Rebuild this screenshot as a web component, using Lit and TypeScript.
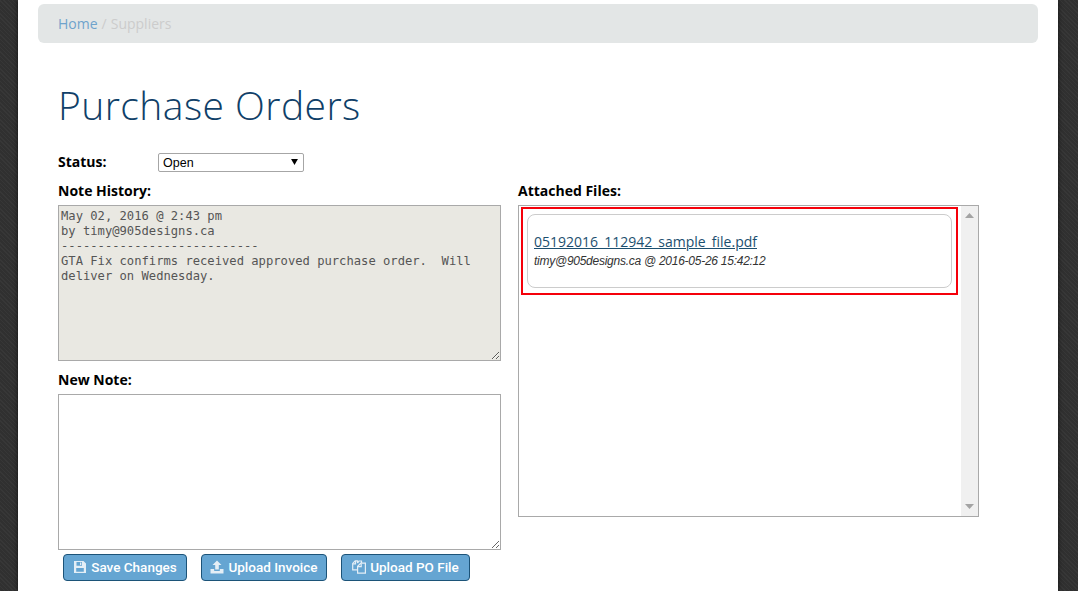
import { LitElement, html, css, svg } from "lit";
import { customElement } from "lit/decorators.js";

const saveIcon = svg`<path fill-rule="evenodd" d="M1 1h9.5L13 3.5V13H1z M3.5 2v3.8h5.5V2z M3.2 8v3.8h7.6V8z M7 2.6h1.3v2.5H7z"/>`;
const uploadIcon = svg`<path d="M7 0.5 11.5 5H8.8V9.5H5.2V5H2.5z"/><path d="M0.5 9H4.2V11H9.8V9H13.5V13.5H0.5z"/>`;
const filesIcon = svg`<g fill="none" stroke="currentColor" stroke-width="1.2"><path d="M5.5 3V.9H3.2L.7 3.4v6.4h4.6"/><path d="M.9 3.8h2.6V1"/><path d="M5.6 13.2V6.2L8.8 3.2H13.4V13.2z"/><path d="M5.8 6.6H9.2V3.4"/><path d="M5.5 3.2 7 1h2.5v2"/></g>`;

@customElement("app-root")
export class AppRoot extends LitElement {
  static styles = css`
    :host { display: block; height: 591px; overflow: hidden; background: #303030;
      background-image: repeating-linear-gradient(45deg, rgba(255,255,255,.035) 0 1px, transparent 1px 3px); }
    * { box-sizing: border-box; }
    .panel { margin: 0 20px 0 18px; height: 591px; background: #fff; padding: 4px 20px 0; box-shadow: 0 0 4px #111;
      font-family: "Open Sans", sans-serif; font-size: 14px; color: #000; }
    .crumb { height: 39px; background: #e3e6e6; border-radius: 6px; padding: 0 20px; display: flex; align-items: center; gap: 4px; font-size: 14px; color: #ccc; }
    .crumb a { color: #6fa3cc; text-decoration: none; }
    .content { padding-left: 20px; }
    h1 { margin: 34px 0 0; height: 56px; font-weight: 300; font-size: 39px; line-height: 56px; color: #0f4068; letter-spacing: .45px; }
    .status { display: flex; align-items: center; margin-top: 19px; height: 20px; }
    label { font-weight: 700; font-size: 14px; line-height: 19px; display: block; }
    .status label { width: 100px; position: relative; top: -1px; }
    .sel { position: relative; display: block; width: 146px; height: 19px; }
    select { appearance: none; width: 100%; height: 100%; border: 1px solid #a6a6a6; border-radius: 2px; background: #fff;
      font: 12.5px "Liberation Sans", sans-serif; color: #000; padding: 1px 0 0 4px; margin: 0; display: block; }
    .sel svg { position: absolute; right: 6px; top: 6px; }
    .cols { display: flex; gap: 17px; margin-top: 9px; }
    .left { width: 443px; }
    .right { width: 461px; }
    textarea { display: block; width: 443px; margin: 5px 0 0; border: 1px solid #a9a9a9; border-radius: 0; padding: 3px 2px;
      font: 12.16px/15px "DejaVu Sans Mono", monospace; color: #555; resize: vertical; outline: none; }
    .hist { height: 156px; background: #e9e8e2; }
    .new { height: 156px; background: #fff; }
    .newlabel { margin-top: 9px; }
    .btns { display: flex; gap: 14px; margin: 4px 0 0 5px; }
    .btn { height: 27px; display: flex; align-items: center; justify-content: center; gap: 4px; background: #65a5d2; border: 1px solid #1c5378; border-radius: 4px;
      color: #fff; font: 500 13.5px Roboto, "Liberation Sans", sans-serif; padding: 0 0 2px; }
    .btn svg { fill: #e4eef6; color: #e4eef6; }
    .b1 { width: 124px; } .b2 { width: 126px; } .b3 { width: 129px; }
    .box { margin-top: 5px; height: 312px; border: 1px solid #a9a9a9; display: flex; }
    .list { flex: 1; padding: 1px 3px 0 2px; min-width: 0; }
    .red { height: 88px; border: 2px solid #f5000a; padding: 5px 4px; }
    .card { height: 74px; border: 1px solid #ccc; border-radius: 8px; padding: 17px 6px 0; }
    .card a { display: block; color: #1c4f6f; font-size: 14px; line-height: 19px; text-decoration: underline; }
    .card i { display: block; font: italic 12px/19px "Liberation Sans", sans-serif; letter-spacing: -.26px; color: #333; margin-top: 1px; }
    .bar { width: 17px; background: #f0f0f0; display: flex; flex-direction: column; justify-content: space-between; align-items: center; padding: 7px 0 7px; }
    .bar svg { fill: #a3a3a3; display: block; }
  `;

  render() {
    const icon = (c: unknown, w = 14) => html`<svg width=${w} height="14" viewBox="0 0 14 14">${c}</svg>`;
    return html`<div class="panel">
      <nav class="crumb"><a href="#">Home</a><span>/</span><span>Suppliers</span></nav>
      <div class="content">
        <h1>Purchase Orders</h1>
        <div class="status">
          <label>Status:</label>
          <span class="sel"><select><option>Open</option></select>
            <svg width="7" height="6" viewBox="0 0 8 7"><path d="M0 0h8L4 7z"/></svg></span>
        </div>
        <div class="cols">
          <div class="left">
            <label>Note History:</label>
            <textarea class="hist" readonly .value=${"May 02, 2016 @ 2:43 pm\nby timy@905designs.ca\n---------------------------\nGTA Fix confirms received approved purchase order.  Will\ndeliver on Wednesday."}></textarea>
            <label class="newlabel">New Note:</label>
            <textarea class="new"></textarea>
            <div class="btns">
              <button class="btn b1">${icon(saveIcon)}Save Changes</button>
              <button class="btn b2">${icon(uploadIcon)}Upload Invoice</button>
              <button class="btn b3">${icon(filesIcon)}Upload PO File</button>
            </div>
          </div>
          <div class="right">
            <label>Attached Files:</label>
            <div class="box">
              <div class="list"><div class="red"><div class="card">
                <a href="#">05192016_112942_sample_file.pdf</a>
                <i>timy@905designs.ca @ 2016-05-26 15:42:12</i>
              </div></div></div>
              <div class="bar">
                <svg width="9" height="5" viewBox="0 0 9 5"><path d="M4.5 0 9 5H0z"/></svg>
                <svg width="9" height="5" viewBox="0 0 9 5"><path d="M0 0h9L4.5 5z"/></svg>
              </div>
            </div>
          </div>
        </div>
      </div>
    </div>`;
  }
}
